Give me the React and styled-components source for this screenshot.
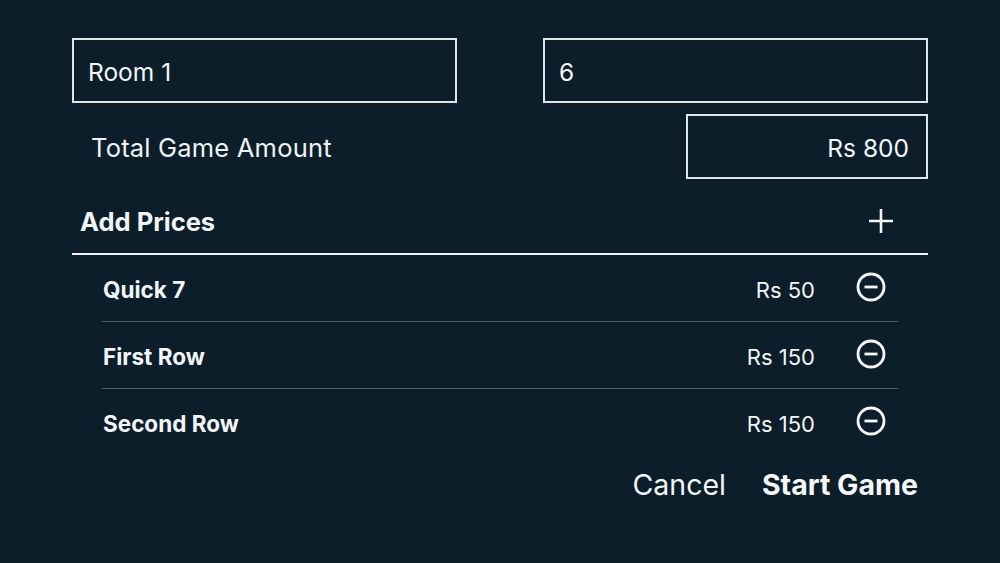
import React from "react";
import styled, { createGlobalStyle } from "styled-components";

const Global = createGlobalStyle`
  html, body { margin: 0; padding: 0; background: #0b1e29; }
  body { font-family: Inter, "Noto Sans", sans-serif; color: #f2f5f7; }
  * { box-sizing: border-box; }
`;

const Page = styled.div`
  width: 1000px;
  height: 563px;
  padding: 38px 72px 0;
  background: #0b1e29;
`;

const InputRow = styled.div`
  display: grid;
  grid-template-columns: 1fr 1fr;
  column-gap: 86px;
`;

const Field = styled.div`
  height: 65px;
  border: 2px solid #dfe5e9;
  display: flex;
  align-items: center;
  justify-content: ${(p) => (p.$right ? "flex-end" : "flex-start")};
  padding: 2px ${(p) => (p.$right ? "17px" : "14px")} 0;
  font-size: 24.5px;
  color: #f4f6f8;
`;

const TotalRow = styled.div`
  margin-top: 11px;
  display: flex;
  align-items: center;
  justify-content: space-between;
`;

const TotalLabel = styled.div`
  padding: 2px 0 0 19px;
  font-size: 25.5px;
  letter-spacing: 0.2px;
  color: #eef2f4;
`;

const TotalField = styled(Field)`
  width: 242px;
`;

const Header = styled.div`
  height: 76px;
  border-bottom: 2px solid #eef2f4;
  display: flex;
  align-items: center;
  justify-content: space-between;
  padding: 10px 34px 0 8px;
`;

const HeaderTitle = styled.div`
  font-size: 25.5px;
  font-weight: 700;
`;

const List = styled.div`
  padding: 0 30px;
`;

const Row = styled.div`
  height: 67px;
  display: flex;
  align-items: center;
  border-bottom: 1px solid ${(p) => (p.$last ? "transparent" : "#4b6370")};
  padding: 3px 12px 0 1px;
`;

const RowName = styled.div`
  flex: 1;
  font-size: 22.5px;
  font-weight: 700;
`;

const RowPrice = styled.div`
  font-size: 22px;
  margin-right: 41px;
`;

const IconBtn = styled.div`
  display: flex;
  align-items: center;
  justify-content: center;
  margin-top: -6px;
`;

const Actions = styled.div`
  display: flex;
  justify-content: flex-end;
  align-items: center;
  gap: 36px;
  padding: 11px 10px 0 0;
`;

const ActionBtn = styled.div`
  font-size: 28.5px;
  font-weight: ${(p) => (p.$primary ? 700 : 400)};
  color: #f4f6f8;
`;

const Plus = () => (
  <svg width="26" height="26" viewBox="0 0 26 26">
    <path d="M13 1v24M1 13h24" stroke="#f4f6f8" strokeWidth="2.6" />
  </svg>
);

const Minus = () => (
  <svg width="30" height="30" viewBox="0 0 30 30">
    <circle cx="15" cy="15" r="13" fill="none" stroke="#f4f6f8" strokeWidth="2.8" />
    <path d="M8.5 15h13" stroke="#f4f6f8" strokeWidth="2.8" />
  </svg>
);

const prices = [
  { name: "Quick 7", amount: "Rs 50" },
  { name: "First Row", amount: "Rs 150" },
  { name: "Second Row", amount: "Rs 150" },
];

export default function App() {
  return (
    <>
      <Global />
      <Page>
        <InputRow>
          <Field>Room 1</Field>
          <Field>6</Field>
        </InputRow>
        <TotalRow>
          <TotalLabel>Total Game Amount</TotalLabel>
          <TotalField $right>Rs 800</TotalField>
        </TotalRow>
        <Header>
          <HeaderTitle>Add Prices</HeaderTitle>
          <Plus />
        </Header>
        <List>
          {prices.map((p, i) => (
            <Row key={p.name} $last={i === prices.length - 1}>
              <RowName>{p.name}</RowName>
              <RowPrice>{p.amount}</RowPrice>
              <IconBtn>
                <Minus />
              </IconBtn>
            </Row>
          ))}
        </List>
        <Actions>
          <ActionBtn>Cancel</ActionBtn>
          <ActionBtn $primary>Start Game</ActionBtn>
        </Actions>
      </Page>
    </>
  );
}
